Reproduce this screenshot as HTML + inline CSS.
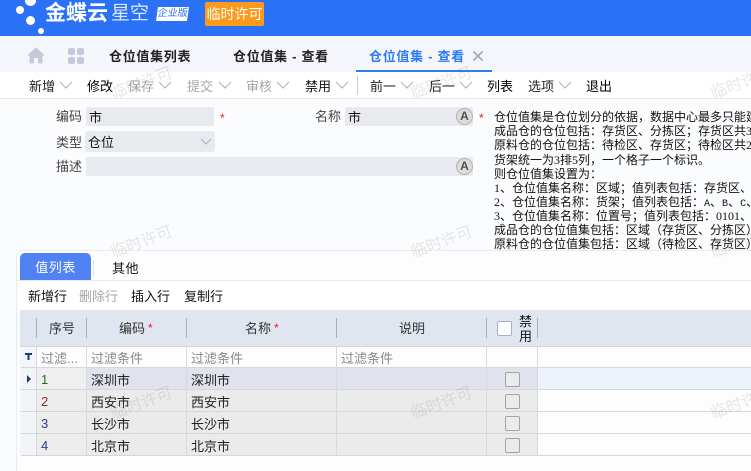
<!DOCTYPE html>
<html><head><meta charset="utf-8">
<style>
html,body{margin:0;padding:0;}
body{width:751px;height:471px;overflow:hidden;position:relative;background:#fbfcfe;font-family:"Liberation Sans","WenQuanYi Zen Hei","Noto Sans CJK SC",sans-serif;font-size:13px;color:#222;}
.a{position:absolute;white-space:nowrap;}
.t{position:absolute;white-space:nowrap;line-height:16px;height:16px;margin-top:1px;}
.wm{position:absolute;white-space:nowrap;font-size:16px;line-height:18px;color:rgba(120,120,120,.17);transform:rotate(-20deg);z-index:20;pointer-events:none;}
.inp{position:absolute;background:#e8eaef;border-radius:2px;}
.A{position:absolute;width:15px;height:15px;border-radius:50%;background:#dcdcdc;border:1px solid #aeb4c2;text-align:center;font-size:12px;line-height:15px;color:#54483c;font-weight:bold;text-shadow:0 0 1px #fff;}
.v{position:absolute;width:1px;background:#d5d9e2;}
.h{position:absolute;height:1px;background:#d2d6de;}
.hs{position:absolute;width:1px;top:318px;height:20px;background:#aab0b8;}
.cb{position:absolute;left:505px;width:15px;height:15px;box-sizing:border-box;border:1px solid #a3a3a3;background:#e9ebef;border-radius:2px;}
.red{color:#f01818;}
.d{position:absolute;left:494px;width:257px;height:14px;overflow:hidden;font-size:12px;line-height:14px;color:#111;white-space:nowrap;}
.m{font-family:"Liberation Serif",serif;font-size:12px;line-height:0;}
.l{font-family:"Liberation Mono",monospace;font-size:10px;line-height:0;}
</style></head><body>

<!-- top header -->
<div class="a" style="left:0;top:0;width:751px;height:36px;background:#2a71f6;overflow:hidden;">
  <div class="a" style="left:16px;top:6px;width:8px;height:8px;border-radius:50%;background:#fff;"></div>
  <div class="a" style="left:25px;top:-4px;width:11px;height:10px;border-radius:50%;background:#fff;"></div>
  <div class="a" style="left:26px;top:16px;width:9px;height:9px;border-radius:50%;background:#fff;"></div>
  <div class="a" style="left:38px;top:28px;width:6px;height:6px;border-radius:50%;background:#fff;"></div>
  <div class="a" style="left:45px;top:1px;font-size:21px;line-height:25px;color:#fff;font-weight:bold;">金蝶云</div>
  <div class="a" style="left:111px;top:2px;font-size:19px;line-height:24px;color:#dbe6fd;">星空</div>
  <div class="a" style="left:157px;top:7px;width:31px;height:14px;background:#fff;color:#2a71f6;font-size:10px;line-height:14px;text-align:center;transform:skewX(-8deg);">企业版</div>
  <div class="a" style="left:205px;top:2px;width:59px;height:24px;background:#fb9a1b;border-radius:2px;color:#fff;text-align:center;font-size:14px;line-height:24px;">临时许可</div>
</div>

<!-- tab bar -->
<div class="a" style="left:0;top:36px;width:751px;height:36px;background:#f5f6fb;"></div>
<svg class="a" style="left:27px;top:47px" width="18" height="17" viewBox="0 0 18 17"><path d="M9 .5 L18 8.5 H15.5 V16.5 H11 V11 H7 V16.5 H2.5 V8.5 H0 Z" fill="#c5c9db"/></svg>
<svg class="a" style="left:68px;top:48px" width="16" height="16" viewBox="0 0 16 16"><g fill="#c5c9db"><rect x="0" y="0" width="7" height="7" rx="2"/><rect x="9" y="0" width="7" height="7" rx="2"/><rect x="0" y="9" width="7" height="7" rx="2"/><rect x="9" y="9" width="7" height="7" rx="2"/></g></svg>
<div class="t" style="left:109px;top:48px;font-weight:bold;letter-spacing:.7px;color:#222;">仓位值集列表</div>
<div class="t" style="left:233px;top:48px;font-weight:bold;letter-spacing:.7px;color:#222;">仓位值集 - 查看</div>
<div class="t" style="left:369px;top:48px;font-weight:bold;letter-spacing:.7px;color:#2e7bf3;">仓位值集 - 查看</div>
<svg class="a" style="left:472px;top:50px" width="12" height="12" viewBox="0 0 12 12"><path d="M1.5 1.5 L10.5 10.5 M10.5 1.5 L1.5 10.5" stroke="#a4a9b8" stroke-width="1.8" fill="none"/></svg>
<div class="a" style="left:356px;top:70px;width:136px;height:2px;background:#2e7bf3;"></div>

<!-- toolbar -->
<div class="a" style="left:0;top:72px;width:751px;height:26px;background:#fff;border-bottom:1px solid #e6e6e6;"></div>
<div class="t" style="left:29px;top:78px;">新增</div>
<div class="t" style="left:87px;top:78px;color:#000;">修改</div>
<div class="t" style="left:128px;top:78px;color:#a6a6a6;">保存</div>
<div class="t" style="left:187px;top:78px;color:#a6a6a6;">提交</div>
<div class="t" style="left:246px;top:78px;color:#a6a6a6;">审核</div>
<div class="t" style="left:305px;top:78px;color:#111;">禁用</div>
<div class="a" style="left:357px;top:76px;width:1px;height:19px;background:#c5cddc;"></div>
<div class="t" style="left:370px;top:78px;">前一</div>
<div class="t" style="left:429px;top:78px;">后一</div>
<div class="t" style="left:487px;top:78px;color:#000;">列表</div>
<div class="t" style="left:528px;top:78px;">选项</div>
<div class="t" style="left:586px;top:78px;color:#000;">退出</div>
<svg class="a" style="left:0;top:0;z-index:2" width="751" height="100" fill="none" stroke="#a9b0c6" stroke-width="1.1">
  <path d="M60 82 L66 88 L72 82"/><path d="M159 82 L165 88 L171 82"/><path d="M219 82 L225 88 L231 82"/><path d="M277 82 L283 88 L289 82"/><path d="M336 82 L342 88 L348 82"/><path d="M401 82 L407 88 L413 82"/><path d="M460 82 L466 88 L472 82"/><path d="M559 82 L565 88 L571 82"/>
</svg>

<!-- form -->
<div class="t" style="left:56px;top:108px;color:#444;">编码</div>
<div class="inp" style="left:86px;top:107px;width:128px;height:19px;"></div>
<div class="t" style="left:89px;top:109px;color:#111;">市</div>
<div class="a red" style="left:220px;top:111px;font-size:12px;line-height:14px;">*</div>
<div class="t" style="left:315px;top:108px;color:#444;">名称</div>
<div class="inp" style="left:345px;top:107px;width:128px;height:19px;"></div>
<div class="t" style="left:348px;top:109px;color:#111;">市</div>
<div class="A" style="left:456px;top:108px;">A</div>
<div class="a red" style="left:479px;top:111px;font-size:12px;line-height:14px;">*</div>

<div class="t" style="left:56px;top:134px;color:#444;">类型</div>
<div class="inp" style="left:85px;top:131px;width:130px;height:21px;border-radius:3px;"></div>
<div class="t" style="left:88px;top:134px;color:#111;">仓位</div>
<svg class="a" style="left:200px;top:138px" width="13" height="8" fill="none" stroke="#a9b0c6" stroke-width="1.1"><path d="M1 1 L6 6 L11 1"/></svg>

<div class="t" style="left:56px;top:158px;color:#444;">描述</div>
<div class="inp" style="left:86px;top:157px;width:387px;height:19px;"></div>
<div class="A" style="left:456px;top:158px;">A</div>

<!-- description text -->
<div class="d" style="top:110px;">仓位值集是仓位划分的依据，数据中心最多只能建</div>
<div class="d" style="top:124px;">成品仓的仓位包括：存货区、分拣区；存货区共<span class="m">3</span></div>
<div class="d" style="top:138px;">原料仓的仓位包括：待检区、存货区；待检区共<span class="m">2</span></div>
<div class="d" style="top:153px;">货架统一为<span class="m">3</span>排<span class="m">5</span>列，一个格子一个标识。</div>
<div class="d" style="top:167px;">则仓位值集设置为：</div>
<div class="d" style="top:181px;"><span class="m">1</span>、仓位值集名称：区域；值列表包括：存货区、</div>
<div class="d" style="top:195px;"><span class="m">2</span>、仓位值集名称：货架；值列表包括：<span class="l">A</span>、<span class="l">B</span>、<span class="l">C</span>、</div>
<div class="d" style="top:209px;"><span class="m">3</span>、仓位值集名称：位置号；值列表包括：<span class="m">0101</span>、</div>
<div class="d" style="top:223px;">成品仓的仓位值集包括：区域（存货区、分拣区）</div>
<div class="d" style="top:237px;height:13px;">原料仓的仓位值集包括：区域（待检区、存货区）</div>

<!-- panel -->
<div class="a" style="left:16px;top:250px;width:735px;height:221px;background:#fdfdfd;border:1px solid #e7ebf3;border-right:0;border-bottom:0;border-radius:5px 0 0 0;box-sizing:border-box;"></div>
<div class="a" style="left:20px;top:253px;width:71px;height:27px;background:#5082f3;border-radius:5px 5px 0 0;color:#fff;text-align:center;line-height:30px;letter-spacing:.5px;">值列表</div>
<div class="a" style="left:93px;top:260px;width:1px;height:16px;background:#dfe3ea;"></div>
<div class="t" style="left:112px;top:260px;color:#111;letter-spacing:.5px;">其他</div>
<div class="a" style="left:17px;top:280px;width:734px;height:1px;background:#e5e9f1;"></div>
<div class="a" style="left:20px;top:281px;width:731px;height:28px;background:#fff;"></div>
<div class="t" style="left:28px;top:288px;color:#111;">新增行</div>
<div class="t" style="left:79px;top:288px;color:#a6a6a6;">删除行</div>
<div class="t" style="left:131px;top:288px;color:#111;">插入行</div>
<div class="t" style="left:184px;top:288px;color:#111;">复制行</div>

<!-- grid -->
<div class="a" style="left:20px;top:310px;width:731px;height:36px;background:#e0e6ef;"></div>
<div class="h" style="left:20px;top:346px;width:731px;"></div>
<div class="a" style="left:20px;top:347px;width:16px;height:20px;background:#f3f5f9;"></div>
<svg class="a" style="left:25px;top:353px" width="8" height="8"><path d="M0 0 H7 V2 H4.5 V7 H2.5 V2 H0 Z" fill="#1a3a7a"/></svg>
<div class="a" style="left:36px;top:367px;width:150px;height:88px;background:#ededed;"></div>
<div class="a" style="left:86px;top:367px;width:451px;height:22px;background:#e0e3ec;"></div>
<div class="a" style="left:36px;top:367px;width:50px;height:22px;background:#efefef;"></div>
<div class="a" style="left:86px;top:389px;width:451px;height:66px;background:#ebebeb;"></div>
<div class="a" style="left:538px;top:367px;width:213px;height:22px;background:#eef2fc;"></div>
<div class="a" style="left:20px;top:367px;width:16px;height:88px;background:#f2f4f8;"></div>
<div class="h" style="left:21px;top:367px;width:730px;"></div>
<div class="h" style="left:21px;top:389px;width:730px;"></div>
<div class="h" style="left:21px;top:411px;width:730px;"></div>
<div class="h" style="left:21px;top:433px;width:730px;"></div>
<div class="h" style="left:21px;top:455px;width:730px;"></div>
<div class="v" style="left:36px;top:347px;height:108px;"></div>
<div class="v" style="left:86px;top:347px;height:108px;"></div>
<div class="v" style="left:186px;top:347px;height:108px;"></div>
<div class="v" style="left:336px;top:347px;height:108px;"></div>
<div class="v" style="left:486px;top:347px;height:108px;"></div>
<div class="v" style="left:537px;top:347px;height:108px;"></div>
<div class="hs" style="left:36px;"></div><div class="hs" style="left:86px;"></div><div class="hs" style="left:186px;"></div><div class="hs" style="left:336px;"></div><div class="hs" style="left:486px;"></div><div class="hs" style="left:537px;"></div>

<div class="t" style="left:49px;top:320px;color:#333;">序号</div>
<div class="t" style="left:119px;top:320px;color:#333;">编码</div>
<div class="a red" style="left:148px;top:321px;font-size:12px;line-height:14px;">*</div>
<div class="t" style="left:245px;top:320px;color:#333;">名称</div>
<div class="a red" style="left:274px;top:321px;font-size:12px;line-height:14px;">*</div>
<div class="t" style="left:399px;top:320px;color:#333;">说明</div>
<div class="a" style="left:497px;top:321px;width:15px;height:15px;box-sizing:border-box;background:#fff;border:1px solid #a9afc0;border-radius:2px;"></div>
<div class="a" style="left:519px;top:314px;width:13px;line-height:15px;color:#111;white-space:normal;">禁用</div>

<div class="t" style="left:41px;top:350px;color:#888;">过滤...</div>
<div class="t" style="left:91px;top:350px;color:#888;">过滤条件</div>
<div class="t" style="left:191px;top:350px;color:#888;">过滤条件</div>
<div class="t" style="left:341px;top:350px;color:#888;">过滤条件</div>

<svg class="a" style="left:26px;top:375px" width="6" height="8"><path d="M1 0 L5 4 L1 8 Z" fill="#1a3a7a"/></svg>
<div class="t" style="left:41px;top:371px;color:#2a6a2a;">1</div>
<div class="t" style="left:41px;top:393px;color:#8a3030;">2</div>
<div class="t" style="left:41px;top:415px;color:#2a3a8a;">3</div>
<div class="t" style="left:41px;top:437px;color:#2a3a8a;">4</div>
<div class="t" style="left:91px;top:372px;">深圳市</div><div class="t" style="left:191px;top:372px;">深圳市</div>
<div class="t" style="left:91px;top:394px;">西安市</div><div class="t" style="left:191px;top:394px;">西安市</div>
<div class="t" style="left:91px;top:416px;">长沙市</div><div class="t" style="left:191px;top:416px;">长沙市</div>
<div class="t" style="left:91px;top:438px;">北京市</div><div class="t" style="left:191px;top:438px;">北京市</div>
<div class="cb" style="top:372px;"></div><div class="cb" style="top:394px;"></div><div class="cb" style="top:416px;"></div><div class="cb" style="top:438px;"></div>

<!-- watermarks -->
<div class="wm" style="left:110px;top:75px;">临时许可</div>
<div class="wm" style="left:410px;top:75px;">临时许可</div>
<div class="wm" style="left:710px;top:75px;">临时许可</div>
<div class="wm" style="left:110px;top:234px;">临时许可</div>
<div class="wm" style="left:410px;top:234px;">临时许可</div>
<div class="wm" style="left:710px;top:234px;">临时许可</div>
<div class="wm" style="left:110px;top:395px;">临时许可</div>
<div class="wm" style="left:410px;top:395px;">临时许可</div>
<div class="wm" style="left:710px;top:395px;">临时许可</div>

</body></html>
